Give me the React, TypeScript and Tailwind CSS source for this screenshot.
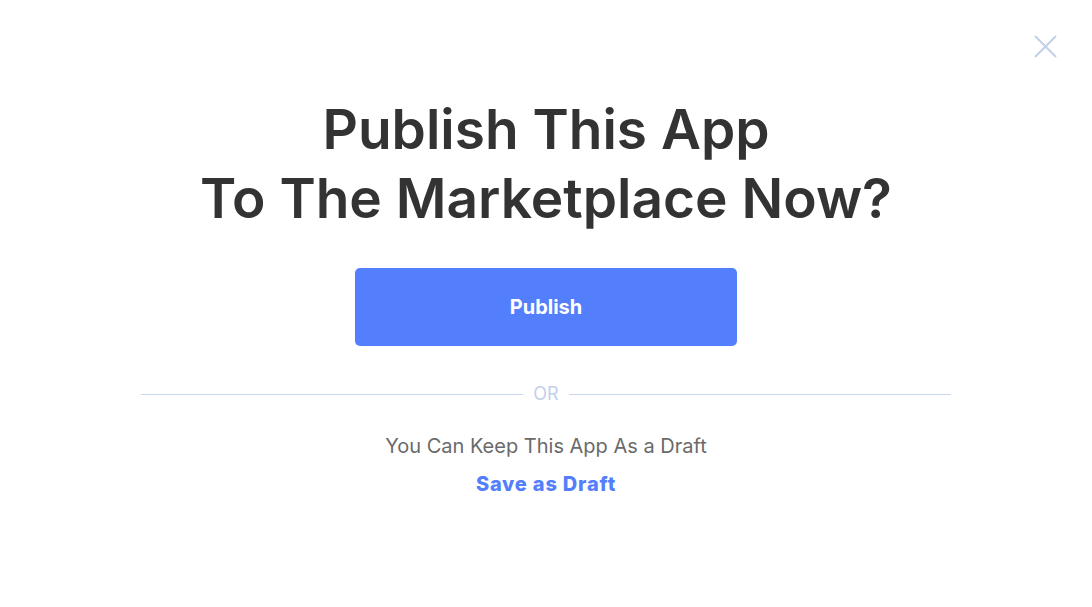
import React from 'react';

export default function App() {
  return (
    <div className="relative h-[607px] w-[1092px] overflow-hidden rounded-b-[6px] bg-white font-['Inter',sans-serif]">
      {/* close button */}
      <button className="absolute right-[35px] top-[35px] text-[#c3d0ea]" aria-label="Close">
        <svg width="23" height="23" viewBox="0 0 23 23" fill="none" stroke="currentColor" strokeWidth="2">
          <path d="M1 1 L22 22 M22 1 L1 22" />
        </svg>
      </button>

      <div className="flex flex-col items-center pt-[95px]">
        <h1 className="text-center text-[55px] font-semibold leading-[69px] text-[#333333]">
          Publish This App
          <br />
          To The Marketplace Now?
        </h1>

        <button className="mt-[35px] h-[78px] w-[382px] rounded-[5px] bg-[#537efc] text-[20px] font-bold text-white">
          Publish
        </button>

        <div className="mt-[37px] flex w-[810px] items-center gap-[10px]">
          <div className="h-px flex-1 bg-[#c9d6f0]" />
          <span className="text-[18px] leading-[22px] text-[#c3d0ea]">OR</span>
          <div className="h-px flex-1 bg-[#c9d6f0]" />
        </div>

        <p className="mt-[29px] text-[20px] leading-[24px] text-[#6a6a6a]">You Can Keep This App As a Draft</p>
        <button className="mt-[14px] text-[20px] font-extrabold leading-[24px] tracking-[0.8px] text-[#537efc]">Save as Draft</button>
      </div>
    </div>
  );
}
